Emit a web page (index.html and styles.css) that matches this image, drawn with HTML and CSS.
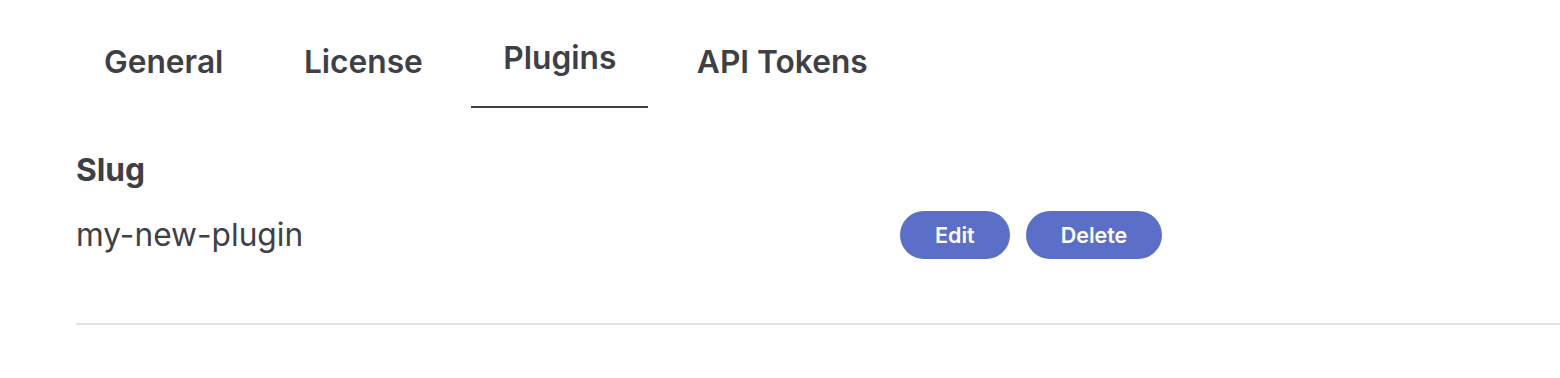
FILE: index.html
```html
<!DOCTYPE html>
<html lang="en">
<head>
<meta charset="utf-8">
<title>Settings – Plugins</title>
<link rel="stylesheet" href="styles.css">
</head>
<body>
<div class="page">
  <nav class="tabs">
    <a class="tab">General</a>
    <a class="tab">License</a>
    <a class="tab active">Plugins</a>
    <a class="tab">API Tokens</a>
  </nav>
  <div class="heading">Slug</div>
  <div class="row">
    <div class="slug">my-new-plugin</div>
    <div class="actions">
      <button class="btn">Edit</button>
      <button class="btn">Delete</button>
    </div>
  </div>
  <div class="divider"></div>
</div>
</body>
</html>
```

FILE: styles.css
```css
html, body {
  margin: 0;
  background: #ffffff;
}
body {
  font-family: Inter, "Noto Sans", "Liberation Sans", sans-serif;
  color: #3f3f46;
}
.page {
  padding: 39px 0 0 76px;
}
.tabs {
  display: flex;
  align-items: flex-start;
  gap: 16.5px;
  margin-left: -4px;
}
.tab {
  font-size: 31.7px;
  font-weight: 600;
  line-height: 38px;
  padding: 4px 32px 0;
  color: #3f3f46;
  cursor: pointer;
}
.tab.active {
  padding: 0 32px 29px;
  border-bottom: 2px solid #3f3f46;
}
.heading {
  margin-top: 43px;
  font-size: 31.7px;
  font-weight: 700;
  line-height: 38px;
}
.row {
  margin-top: 22px;
  height: 48px;
  display: grid;
  grid-template-columns: 824px auto;
  align-items: center;
}
.slug {
  font-size: 31.7px;
  line-height: 38px;
}
.actions {
  display: flex;
  gap: 16px;
}
.btn {
  font-family: inherit;
  font-size: 21.5px;
  font-weight: 600;
  height: 48px;
  padding: 0 35px;
  border: none;
  border-radius: 24px;
  background: #5c6fc8;
  color: #ffffff;
  cursor: pointer;
}
.divider {
  margin-top: 64px;
  border-top: 2px solid #e4e4e7;
}
```
